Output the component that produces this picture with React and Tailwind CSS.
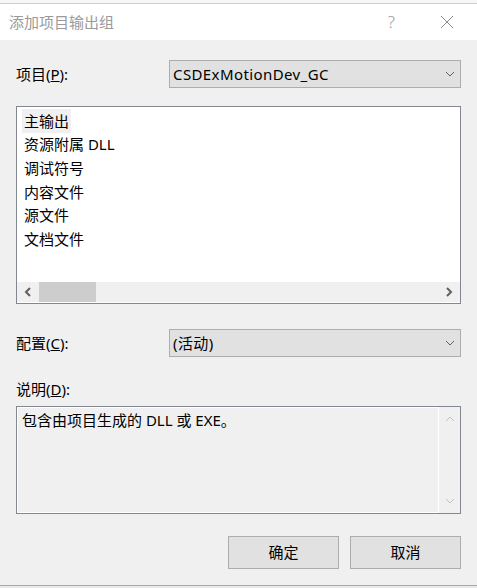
import React from "react";

const font = "font-['Noto_Sans','Noto_Sans_CJK_SC',sans-serif]";

const Chevron = ({ dir = "down", className = "" }) => {
  const pts = {
    down: "1,1 5,5 9,1",
    up: "1,5 5,1 9,5",
  }[dir];
  return (
    <svg width="10" height="6" viewBox="0 0 10 6" className={className}>
      <polyline points={pts} fill="none" stroke="currentColor" strokeWidth="1" />
    </svg>
  );
};

const Arrow = ({ dir }) => (
  <svg width="8" height="10" viewBox="0 0 8 10" className="text-[#606060]">
    <polyline
      points={dir === "left" ? "6,1 2,5 6,9" : "2,1 6,5 2,9"}
      fill="none"
      stroke="currentColor"
      strokeWidth="2"
    />
  </svg>
);

const Combo = ({ value }) => (
  <div className="flex h-[28px] w-[292px] items-center justify-between border border-[#adadad] bg-[#e1e1e1] pl-[3px] pr-[5px]">
    <span className="text-[15px] leading-none tracking-[0.4px]">{value}</span>
    <Chevron className="text-[#606060]" />
  </div>
);

const items = ["主输出", "资源附属 DLL", "调试符号", "内容文件", "源文件", "文档文件"];

export default function App() {
  return (
    <div className={`flex h-[588px] w-[477px] flex-col bg-[#f0f0f0] text-black ${font}`}>
      <div className="h-[4px] shrink-0 border-b border-[#cfcfcf] bg-[#f7f7f7]" />

      <div className="flex h-[36px] shrink-0 items-center bg-white pl-[9px]">
        <span className="text-[15px] text-[#9a9a9a]">添加项目输出组</span>
        <span className="ml-auto text-[17px] font-light text-[#9a9a9a]">?</span>
        <svg width="14" height="14" viewBox="0 0 14 14" className="ml-[45px] mr-[23px]">
          <path d="M1 1L13 13M13 1L1 13" stroke="#8a8a8a" strokeWidth="1" />
        </svg>
      </div>

      <div className="flex flex-1 flex-col px-[16px]">
        <div className="mt-[20px] flex items-center justify-between">
          <span className="text-[15px]">
            项目(<span className="underline">P</span>):
          </span>
          <Combo value="CSDExMotionDev_GC" />
        </div>

        <div className="mt-[18px] flex h-[198px] flex-col border border-[#828790] bg-white">
          <div className="flex flex-1 flex-col pl-[5px] pt-[2px]">
            {items.map((t, i) => (
              <div key={t} className="flex h-[23.6px] items-center">
                <span
                  className={`px-[2px] text-[15px] leading-[24px] ${i === 0 ? "bg-[#f0f0f0]" : ""}`}
                >
                  {t}
                </span>
              </div>
            ))}
          </div>
          <div className="mb-[1px] flex h-[20px] items-center bg-[#f0f0f0]">
            <div className="flex w-[22px] justify-center">
              <Arrow dir="left" />
            </div>
            <div className="h-full w-[57px] bg-[#cdcdcd]" />
            <div className="ml-auto flex w-[22px] justify-center">
              <Arrow dir="right" />
            </div>
          </div>
        </div>

        <div className="mt-[25px] flex items-center justify-between">
          <span className="text-[15px]">
            配置(<span className="underline">C</span>):
          </span>
          <Combo value="(活动)" />
        </div>

        <div className="mt-[22px] text-[15px] leading-[20px]">
          说明(<span className="underline">D</span>):
        </div>

        <div className="mt-[7px] flex h-[108px] border border-[#828790] bg-[#f0f0f0]">
          <div className="flex flex-1 border border-r-0 border-white pl-[4px]">
            <span className="text-[15px] leading-[24px]">包含由项目生成的 DLL 或 EXE。</span>
          </div>
          <div className="flex w-[22px] flex-col items-center justify-between border-l border-white py-[9px] text-[#c2c2c2]">
            <Chevron dir="up" />
            <Chevron dir="down" />
          </div>
        </div>

        <div className="mt-[22px] flex justify-end gap-[11px]">
          <button className="h-[33px] w-[111px] border border-[#adadad] bg-[#e1e1e1] text-[15px]">
            确定
          </button>
          <button className="h-[33px] w-[111px] border border-[#adadad] bg-[#e1e1e1] text-[15px]">
            取消
          </button>
        </div>
      </div>

      <div className="h-[3px] shrink-0 border-t border-[#a9a9a9] bg-[#e9e9e9]" />
    </div>
  );
}
